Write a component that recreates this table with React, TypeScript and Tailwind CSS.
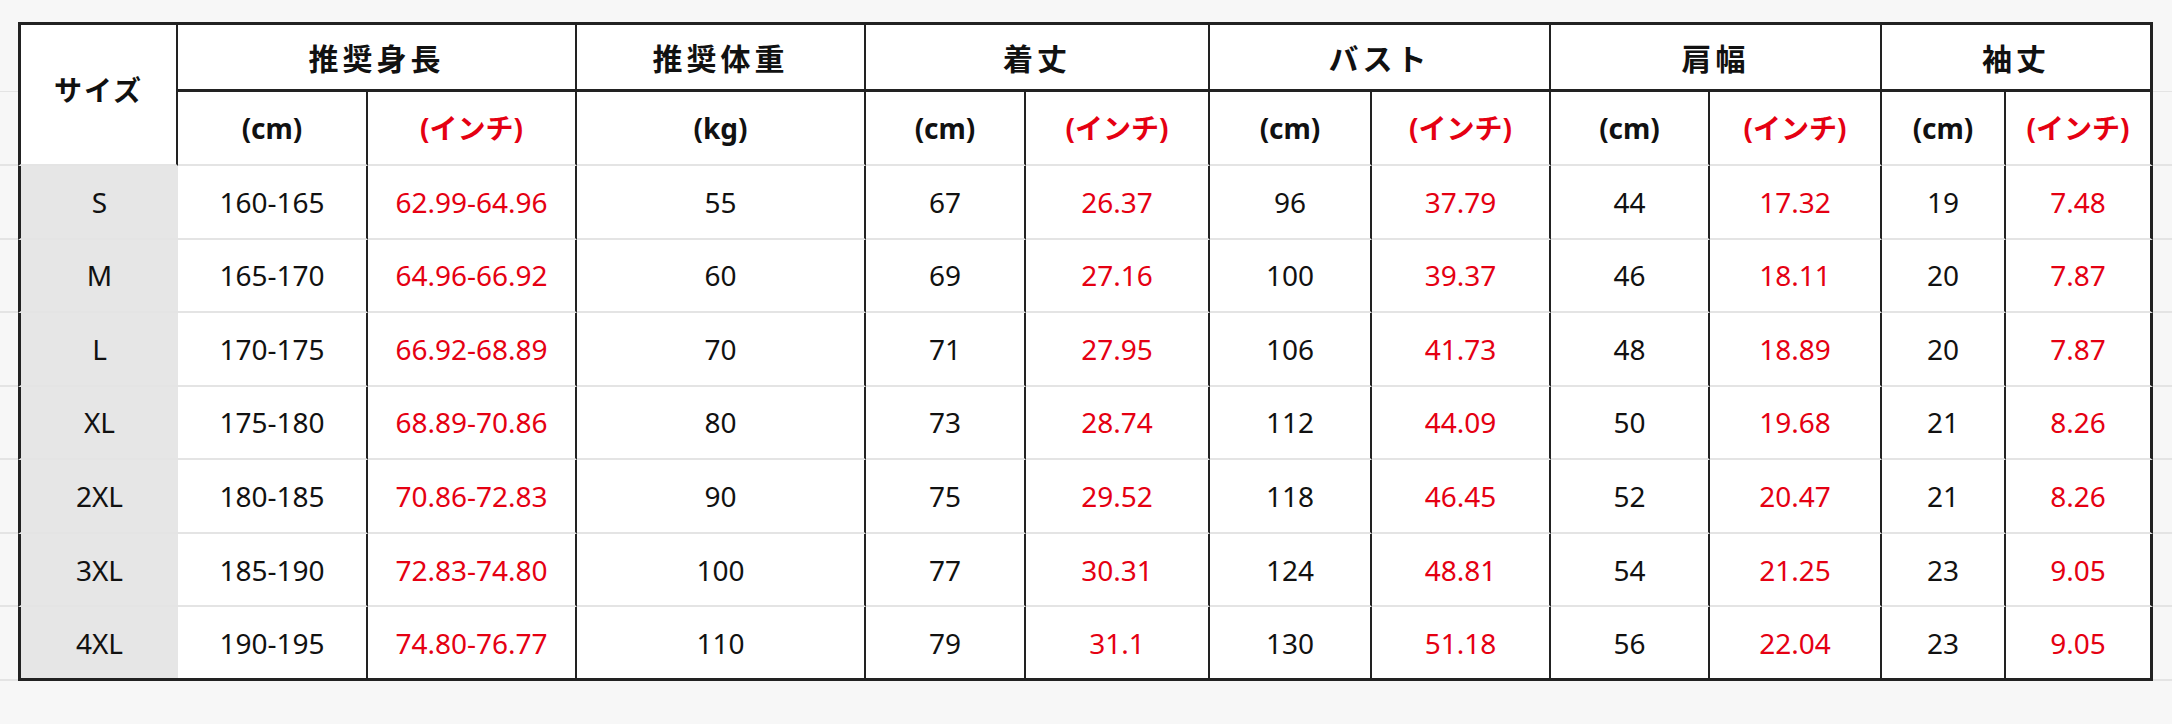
import React from "react";

const rows: string[][] = [
  ["S", "160-165", "62.99-64.96", "55", "67", "26.37", "96", "37.79", "44", "17.32", "19", "7.48"],
  ["M", "165-170", "64.96-66.92", "60", "69", "27.16", "100", "39.37", "46", "18.11", "20", "7.87"],
  ["L", "170-175", "66.92-68.89", "70", "71", "27.95", "106", "41.73", "48", "18.89", "20", "7.87"],
  ["XL", "175-180", "68.89-70.86", "80", "73", "28.74", "112", "44.09", "50", "19.68", "21", "8.26"],
  ["2XL", "180-185", "70.86-72.83", "90", "75", "29.52", "118", "46.45", "52", "20.47", "21", "8.26"],
  ["3XL", "185-190", "72.83-74.80", "100", "77", "30.31", "124", "48.81", "54", "21.25", "23", "9.05"],
  ["4XL", "190-195", "74.80-76.77", "110", "79", "31.1", "130", "51.18", "56", "22.04", "23", "9.05"],
];

const RED = new Set([2, 5, 7, 9, 11]);

const groups: { label: string; span2: boolean }[] = [
  { label: "推奨身長", span2: true },
  { label: "推奨体重", span2: false },
  { label: "着丈", span2: true },
  { label: "バスト", span2: true },
  { label: "肩幅", span2: true },
  { label: "袖丈", span2: true },
];

const subs: { label: string; red: boolean }[] = [
  { label: "(cm)", red: false },
  { label: "(インチ)", red: true },
  { label: "(kg)", red: false },
  { label: "(cm)", red: false },
  { label: "(インチ)", red: true },
  { label: "(cm)", red: false },
  { label: "(インチ)", red: true },
  { label: "(cm)", red: false },
  { label: "(インチ)", red: true },
  { label: "(cm)", red: false },
  { label: "(インチ)", red: true },
];

export default function App() {
  return (
    <div
      className="w-[2172px] h-[724px] bg-[#f7f7f7] grid grid-cols-[18px_160px_190px_209px_289px_160px_184px_162px_179px_159px_172px_124px_147px_1fr] grid-rows-[22px_70px_74px_repeat(7,73.57px)_1fr] text-[#111]"
      style={{ fontFamily: '"Noto Sans", "Noto Sans CJK JP", sans-serif' }}
    >
      {/* top margin */}
      <div className="col-span-14" />

      {/* header row 1 */}
      <div className="border-b border-[#e4e4e4]" />
      <div className="row-span-2 bg-white border-l-[3px] border-t-[3px] border-r-2 border-b-2 border-l-[#222] border-t-[#222] border-r-[#222] border-b-[#e4e4e4] flex items-center justify-center pb-3">
        <span
          className="text-[28px] font-bold tracking-[2px]"
          style={{ fontFamily: '"Noto Sans CJK JP", sans-serif' }}
        >
          サイズ
        </span>
      </div>
      {groups.map((g, i) => (
        <div
          key={i}
          className={`${g.span2 ? "col-span-2" : "col-span-1"} bg-white border-t-[3px] border-b-[3px] ${
            i === groups.length - 1 ? "border-r-[3px]" : "border-r-2"
          } border-[#222] flex items-center justify-center`}
        >
          <span
            className="text-[30px] font-bold tracking-[4px]"
            style={{ fontFamily: '"Noto Sans CJK JP", sans-serif' }}
          >
            {g.label}
          </span>
        </div>
      ))}
      <div className="border-b border-[#e4e4e4]" />

      {/* header row 2 */}
      <div className="border-b-2 border-[#e4e4e4]" />
      {subs.map((s, i) => (
        <div
          key={i}
          className={`bg-white border-b-2 border-b-[#e4e4e4] ${
            i === subs.length - 1 ? "border-r-[3px]" : "border-r-2"
          } border-r-[#222] flex items-center justify-center`}
        >
          <span
            className={`text-[28px] font-bold ${s.red ? "text-[#e50012]" : "text-[#111]"}`}
            style={{ fontFamily: '"Noto Sans", "Noto Sans CJK JP", sans-serif' }}
          >
            {s.label}
          </span>
        </div>
      ))}
      <div className="border-b-2 border-[#e4e4e4]" />

      {/* data rows */}
      {rows.map((r, ri) => {
        const last = ri === rows.length - 1;
        return (
          <React.Fragment key={ri}>
            <div className="border-b-2 border-[#e4e4e4]" />
            {r.map((v, ci) => {
              const bottom = last ? "border-b-[3px] border-b-[#222]" : "border-b-2 border-b-[#e4e4e4]";
              if (ci === 0) {
                return (
                  <div
                    key={ci}
                    className={`bg-[#e6e6e6] border-l-[3px] border-l-[#222] ${bottom} flex items-center justify-center`}
                  >
                    <span className="text-[28px]">{v}</span>
                  </div>
                );
              }
              return (
                <div
                  key={ci}
                  className={`bg-white ${bottom} ${
                    ci === r.length - 1 ? "border-r-[3px]" : "border-r-2"
                  } border-r-[#222] flex items-center justify-center`}
                >
                  <span className={`text-[28px] ${RED.has(ci) ? "text-[#e50012]" : "text-[#111]"}`}>{v}</span>
                </div>
              );
            })}
            <div className="border-b-2 border-[#e4e4e4]" />
          </React.Fragment>
        );
      })}

      {/* bottom margin */}
      <div className="col-span-14" />
    </div>
  );
}
